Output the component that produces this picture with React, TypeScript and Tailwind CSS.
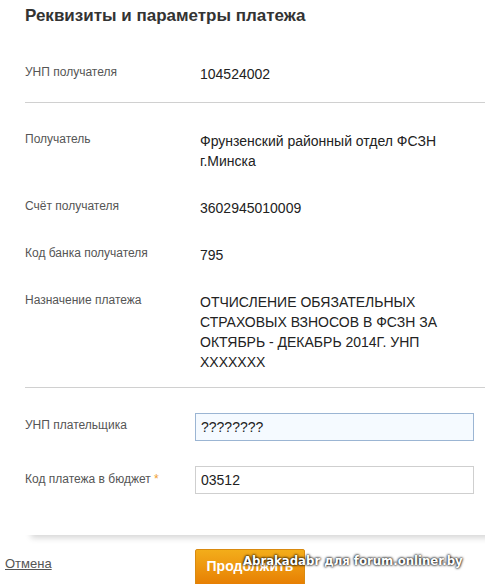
import React from 'react';

const rows = [
  { label: 'Получатель', value: ['Фрунзенский районный отдел ФСЗН', 'г.Минска'] },
  { label: 'Счёт получателя', value: ['3602945010009'] },
  { label: 'Код банка получателя', value: ['795'] },
  {
    label: 'Назначение платежа',
    value: ['ОТЧИСЛЕНИЕ ОБЯЗАТЕЛЬНЫХ', 'СТРАХОВЫХ ВЗНОСОВ В ФСЗН ЗА', 'ОКТЯБРЬ - ДЕКАБРЬ 2014Г. УНП', 'XXXXXXX'],
  },
];

const Row: React.FC<{ label: string; value: string[] }> = ({ label, value }) => (
  <div className="flex items-start">
    <div className="w-[175px] shrink-0 text-[12px] leading-[20px] text-[#555]">{label}</div>
    <div className="mt-[2px] text-[14px] leading-[20px] text-[#222]">
      {value.map((line, i) => (
        <div key={i}>{line}</div>
      ))}
    </div>
  </div>
);

export default function App() {
  return (
    <div className="relative h-[584px] w-[485px] overflow-hidden bg-white font-['Liberation_Sans',Arial,sans-serif]">
      <div className="ml-[25px] mr-[-30px] bg-white pb-[41px] shadow-[0_9px_6px_-6px_rgba(0,0,0,0.16)]">
        <h1 className="pt-[4px] text-[17px] font-bold leading-[24px] text-[#333]">Реквизиты и параметры платежа</h1>

        <div className="mt-[34px]">
          <Row label="УНП получателя" value={['104524002']} />
        </div>
        <div className="mt-[18px] h-px bg-[#d0d0d0]" />

        <div className="flex flex-col gap-[25px] pt-[26px]">
          {rows.map((r) => (
            <Row key={r.label} label={r.label} value={r.value} />
          ))}
        </div>
        <div className="mt-[15px] h-px bg-[#d0d0d0]" />

        <div className="flex flex-col gap-[25px] pt-[25px]">
          <div className="flex items-start">
            <div className="w-[170px] shrink-0 pt-[2px] text-[12px] leading-[20px] text-[#555]">УНП плательщика</div>
            <input
              readOnly
              value="????????"
              className="h-[28px] w-[279px] border border-[#9bb5d3] bg-[#f5faff] px-[5px] text-[14px] text-[#222] outline-none"
            />
          </div>
          <div className="flex items-start">
            <div className="w-[170px] shrink-0 pt-[3px] text-[12px] leading-[20px] text-[#555]">
              Код платежа в бюджет <span className="text-[#f0a030]">*</span>
            </div>
            <input
              readOnly
              value="03512"
              className="h-[28px] w-[279px] border border-[#cfcfcf] bg-white px-[5px] text-[14px] text-[#222] outline-none"
            />
          </div>
        </div>
      </div>

      <div className="mt-[14px] flex items-start">
        <a href="#" className="ml-[5px] mt-[7px] w-[190px] text-[13px] leading-[16px] text-[#555] underline">
          Отмена
        </a>
        <button className="flex h-[40px] w-[110px] items-start justify-center rounded-[2px] border border-[#d98a10] bg-gradient-to-b from-[#f3ad1a] to-[#e57a00] pt-[6px] text-[14px] font-bold leading-[20px] text-white">
          Продолжить
        </button>
      </div>

      <div className="absolute left-[243px] top-[552px] whitespace-nowrap font-['DejaVu_Sans_Condensed','DejaVu_Sans',sans-serif] text-[13px] font-bold leading-[18px] text-white [text-shadow:0_0_3px_#000,0_0_2px_#000]">
        Abrakadabr для forum.onliner.by
      </div>
    </div>
  );
}
